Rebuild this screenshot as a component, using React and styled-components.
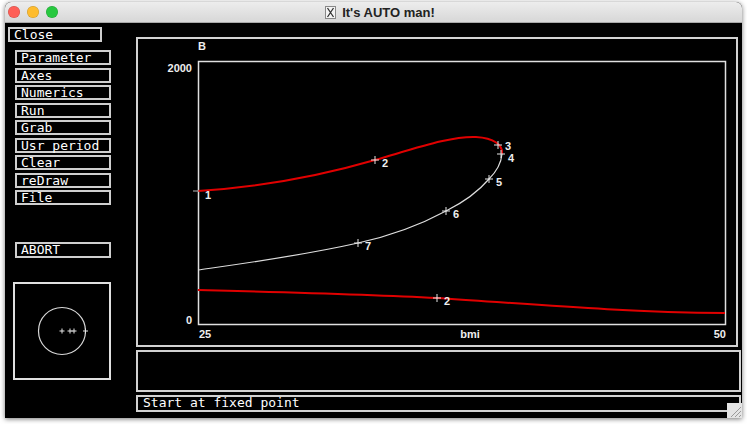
import styled, { createGlobalStyle } from "styled-components";

const GlobalStyle = createGlobalStyle`
  html, body {
    margin: 0;
    padding: 0;
    background: #ffffff;
  }
  body {
    font-family: "DejaVu Sans Mono", "Liberation Mono", monospace;
  }
`;

const Screen = styled.div`
  width: 747px;
  height: 424px;
  padding: 2px 0 0 5px;
  box-sizing: border-box;
  overflow: hidden;
`;

const Window = styled.div`
  position: relative;
  width: 737px;
  height: 416px;
  display: flex;
  flex-direction: column;
  background: #000;
  border-radius: 6px 6px 0 0;
  box-shadow: 0 1px 5px rgba(0, 0, 0, 0.55);
  overflow: hidden;
`;

const TitleBar = styled.div`
  flex: none;
  height: 21px;
  display: flex;
  align-items: center;
  background: linear-gradient(#ededed, #d7d7d7);
  border-bottom: 1px solid #a9a9a9;
  box-sizing: border-box;
`;

const Lights = styled.div`
  display: flex;
  gap: 7px;
  padding-left: 3px;
`;

const Light = styled.span`
  width: 12px;
  height: 12px;
  border-radius: 50%;
  background: ${(p) => p.$color};
  box-shadow: inset 0 0 0 0.5px rgba(0, 0, 0, 0.2);
`;

const Title = styled.div`
  flex: 1;
  display: flex;
  justify-content: center;
  align-items: center;
  gap: 6px;
  padding-right: 40px;
  font-family: "Liberation Sans", Arial, sans-serif;
  font-weight: bold;
  font-size: 13px;
  color: #222;
`;

const Body = styled.div`
  flex: 1;
  display: flex;
  color: #fff;
`;

const Sidebar = styled.div`
  width: 131px;
  flex: none;
  display: flex;
  flex-direction: column;
`;

const Button = styled.div`
  box-sizing: border-box;
  height: ${(p) => p.$h || 15}px;
  width: ${(p) => p.$w || 96}px;
  border: 2px solid #cfcfcf;
  padding-left: 4px;
  font-size: 13px;
  line-height: 11px;
  color: #fff;
  white-space: pre;
`;

const CloseButton = styled(Button)`
  margin: 4px 0 0 3px;
  padding-left: 4px;
`;

const Menu = styled.div`
  display: flex;
  flex-direction: column;
  gap: 2.5px;
  margin: 8px 0 0 10px;
`;

const AbortButton = styled(Button)`
  margin: 37px 0 0 10px;
`;

const Orbit = styled.div`
  box-sizing: border-box;
  width: 98px;
  height: 98px;
  margin: 24px 0 0 8px;
  border: 2px solid #e0e0e0;
  svg {
    display: block;
  }
`;

const Main = styled.div`
  flex: 1;
  display: flex;
  flex-direction: column;
  gap: 3px;
  padding: 14px 1px 0 0;
`;

const Panel = styled.div`
  box-sizing: border-box;
  border: 2px solid #d2d2d2;
  height: ${(p) => p.$h}px;
  margin-right: ${(p) => p.$mr || 0}px;
  svg {
    display: block;
  }
`;

const StatusBar = styled(Panel)`
  padding-left: 5px;
  font-size: 13px;
  line-height: 12px;
  color: #fff;
  white-space: pre;
`;

const Grip = styled.div`
  position: absolute;
  right: 0;
  bottom: 0;
  width: 15px;
  height: 15px;
  background: #e4e4e4;
  svg {
    display: block;
  }
`;

const menuItems = [
  "Parameter",
  "Axes",
  "Numerics",
  "Run",
  "Grab",
  "Usr period",
  "Clear",
  "reDraw",
  "File",
];

// labelled points on the branches, in screen pixels (dy = label baseline offset)
const points = [
  { x: 375, y: 160, n: "2", dy: 7 },
  { x: 498, y: 145, n: "3", dy: 5 },
  { x: 501, y: 154, n: "4", dy: 8 },
  { x: 489, y: 179, n: "5", dy: 7 },
  { x: 446, y: 211, n: "6", dy: 7 },
  { x: 358, y: 243, n: "7", dy: 7 },
  { x: 437, y: 298, n: "2", dy: 7 },
];

function Cross({ x, y, r = 4 }) {
  return (
    <g stroke="#e6e6e6" strokeWidth="1">
      <line x1={x - r} y1={y} x2={x + r} y2={y} />
      <line x1={x} y1={y - r} x2={x} y2={y + r} />
    </g>
  );
}

function Chart() {
  const label = {
    fill: "#eee",
    fontFamily: "Liberation Sans, Arial, sans-serif",
    fontWeight: "bold",
    fontSize: 11,
  };
  return (
    <svg width="598" height="306" viewBox="138 39 598 306">
      <rect x="198.5" y="61.5" width="527" height="263" fill="none" stroke="#e0e0e0" strokeWidth="1.5" />
      <text x="198" y="50" {...label}>B</text>
      <text x="192" y="72" textAnchor="end" {...label}>2000</text>
      <text x="192" y="324" textAnchor="end" {...label}>0</text>
      <text x="199" y="338" {...label}>25</text>
      <text x="470" y="338" textAnchor="middle" {...label}>bmi</text>
      <text x="726" y="338" textAnchor="end" {...label}>50</text>

      <path
        d="M502,154 C501,165 496,172 489,179 C478,192 462,203 446,211 C420,225 390,236 358,243 C300,256 240,264 198,270"
        fill="none"
        stroke="#dcdcdc"
        strokeWidth="1.2"
      />
      <path
        d="M198,191 C260,187 320,176 375,160 C420,147 452,136 476,137 C494,138 503,145 502,154"
        fill="none"
        stroke="#e00000"
        strokeWidth="2"
      />
      <path
        d="M198,290 C320,293 400,296 437,298 C530,304 620,312 725,313"
        fill="none"
        stroke="#e00000"
        strokeWidth="2"
      />
      <line x1="193" y1="191" x2="199" y2="191" stroke="#bbb" strokeWidth="1" />
      <text x="205" y="199" {...label}>1</text>

      {points.map((p, i) => (
        <g key={i}>
          <Cross x={p.x} y={p.y} />
          <text x={p.x + 7} y={p.y + p.dy} {...label}>{p.n}</text>
        </g>
      ))}
    </svg>
  );
}

function OrbitPlot() {
  return (
    <svg width="94" height="94" viewBox="15 285 94 94">
      <circle cx="62" cy="332" r="23.5" fill="none" stroke="#d8d8d8" strokeWidth="1.2" />
      {[62, 70, 74, 85.5].map((x) => (
        <Cross key={x} x={x} y={332} r={2.5} />
      ))}
    </svg>
  );
}

function XLogo() {
  return (
    <svg width="11" height="13" viewBox="0 0 11 13">
      <rect x="0.5" y="0.5" width="10" height="12" fill="#f4f4f4" stroke="#888" />
      <path d="M2.5,2 L8.5,11 M8.5,2 L2.5,11" stroke="#333" strokeWidth="1.3" />
    </svg>
  );
}

export default function App() {
  return (
    <Screen>
      <GlobalStyle />
      <Window>
        <TitleBar>
          <Lights>
            <Light $color="#fe5f57" />
            <Light $color="#febc2e" />
            <Light $color="#28c840" />
          </Lights>
          <Title>
            <XLogo />
            <span>It's AUTO man!</span>
          </Title>
        </TitleBar>
        <Body>
          <Sidebar>
            <CloseButton $w={94}>Close</CloseButton>
            <Menu>
              {menuItems.map((m) => (
                <Button key={m}>{m}</Button>
              ))}
            </Menu>
            <AbortButton $h={16}>ABORT</AbortButton>
            <Orbit>
              <OrbitPlot />
            </Orbit>
          </Sidebar>
          <Main>
            <Panel $h={310} $mr={3}>
              <Chart />
            </Panel>
            <Panel $h={42} />
            <StatusBar $h={17}>Start at fixed point</StatusBar>
          </Main>
        </Body>
        <Grip>
          <svg width="15" height="15" viewBox="0 0 15 15">
            <path d="M4,14 L14,4 M8,14 L14,8 M12,14 L14,12" stroke="#9a9a9a" strokeWidth="1" />
          </svg>
        </Grip>
      </Window>
    </Screen>
  );
}
